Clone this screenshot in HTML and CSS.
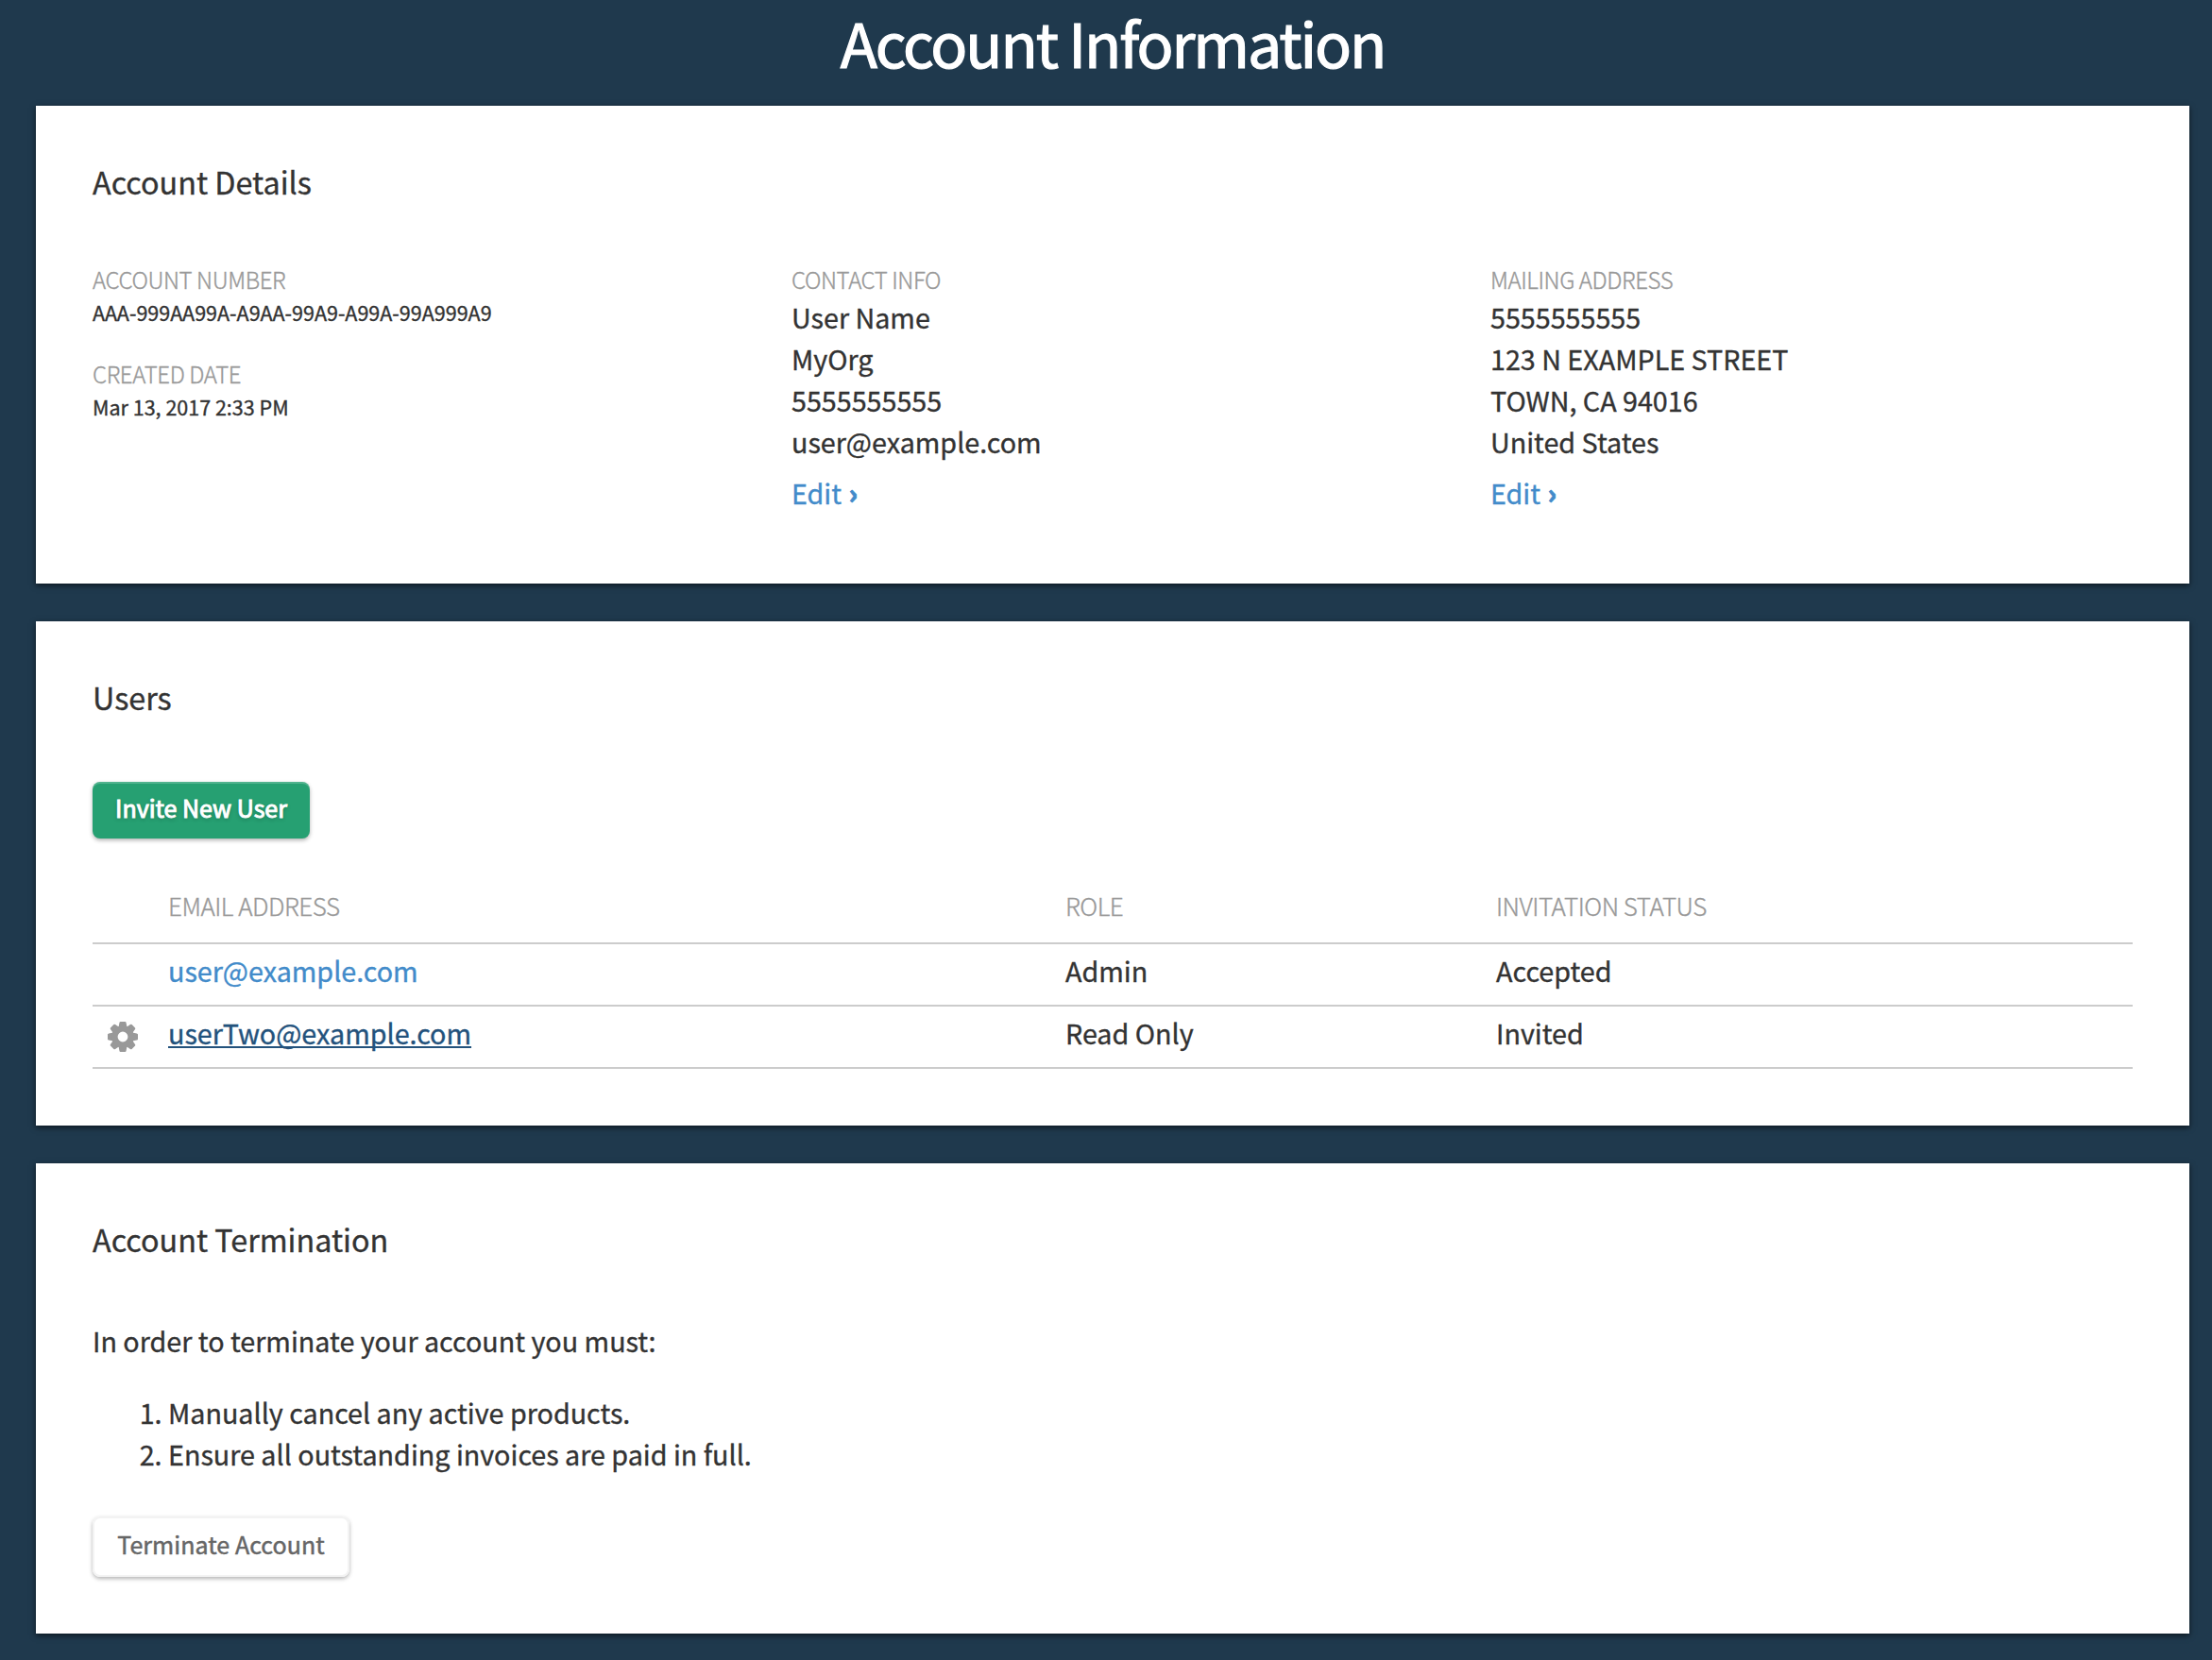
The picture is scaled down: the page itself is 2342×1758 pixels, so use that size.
FILE: index.html
```html
<!DOCTYPE html>
<html lang="en">
<head>
<meta charset="utf-8">
<title>Account Information</title>
<link rel="stylesheet" href="styles.css">
</head>
<body>
<h1 class="page-title">Account Information</h1>
<main class="cards">
  <section class="card">
    <h2 class="card-title">Account Details</h2>
    <div class="details">
      <div class="detail-col">
        <div class="label">ACCOUNT NUMBER</div>
        <div class="small">AAA-999AA99A-A9AA-99A9-A99A-99A999A9</div>
        <div class="label label-created">CREATED DATE</div>
        <div class="small">Mar 13, 2017 2:33 PM</div>
      </div>
      <div class="detail-col">
        <div class="label">CONTACT INFO</div>
        <div>User Name</div>
        <div>MyOrg</div>
        <div>5555555555</div>
        <div>user@example.com</div>
        <a class="link edit" href="#">Edit <b class="chevron">›</b></a>
      </div>
      <div class="detail-col">
        <div class="label">MAILING ADDRESS</div>
        <div>5555555555</div>
        <div>123 N EXAMPLE STREET</div>
        <div>TOWN, CA 94016</div>
        <div>United States</div>
        <a class="link edit" href="#">Edit <b class="chevron">›</b></a>
      </div>
    </div>
  </section>

  <section class="card">
    <h2 class="card-title">Users</h2>
    <button class="btn btn-primary" type="button">Invite New User</button>
    <table class="users">
      <colgroup><col class="col-gear"><col class="col-email"><col class="col-role"><col></colgroup>
      <thead>
        <tr><th></th><th>EMAIL ADDRESS</th><th>ROLE</th><th>INVITATION STATUS</th></tr>
      </thead>
      <tbody>
        <tr><td></td><td><a class="link" href="#">user@example.com</a></td><td>Admin</td><td>Accepted</td></tr>
        <tr>
          <td class="gear-cell"><svg class="gear" viewBox="-16 -16 32 32" aria-hidden="true">
            <defs><path id="tooth" d="M-4.5-10 L-3.6-14.8 Q-3.4-16-2.4-16 H2.4 Q3.4-16 3.6-14.8 L4.5-10Z"/></defs>
            <use href="#tooth"/><use href="#tooth" transform="rotate(45)"/><use href="#tooth" transform="rotate(90)"/><use href="#tooth" transform="rotate(135)"/>
            <use href="#tooth" transform="rotate(180)"/><use href="#tooth" transform="rotate(225)"/><use href="#tooth" transform="rotate(270)"/><use href="#tooth" transform="rotate(315)"/>
            <circle r="8.6" fill="none" stroke="#999" stroke-width="6.4"/>
          </svg></td>
          <td><a class="link link-active" href="#">userTwo@example.com</a></td><td>Read Only</td><td>Invited</td>
        </tr>
      </tbody>
    </table>
  </section>

  <section class="card">
    <h2 class="card-title">Account Termination</h2>
    <p class="intro">In order to terminate your account you must:</p>
    <ol class="steps">
      <li>Manually cancel any active products.</li>
      <li>Ensure all outstanding invoices are paid in full.</li>
    </ol>
    <button class="btn btn-plain" type="button">Terminate Account</button>
  </section>
</main>
</body>
</html>
```
FILE: styles.css
```css
* { box-sizing: border-box; }
body {
  margin: 0;
  min-height: 1758px;
  background: #1f394d;
  color: #333;
  font: 400 28.7px/44px "Noto Sans CJK SC", "Noto Sans", sans-serif;
  -webkit-text-stroke: .35px currentColor;
}
.page-title {
  margin: 0;
  padding: 0 24px 24px 38px;
  height: 112px;
  color: #fff;
  font-size: 64.5px;
  line-height: 88px;
  font-weight: 400;
  letter-spacing: -2.1px;
  text-align: center;
  -webkit-text-stroke: 1.2px currentColor;
}
.cards { display: flex; flex-direction: column; gap: 40px; padding: 0 24px 28px 38px; }
.card {
  padding: 60px;
  background: #fff;
  box-shadow: 0 2px 6px rgba(0, 0, 0, .6);
}
.card-title { margin: 0; font-size: 32.3px; line-height: 40px; font-weight: 400; }
.details { display: grid; grid-template-columns: 740px 740px 1fr; margin-top: 64px; }
.label { padding-top: 2px; color: #999; font-size: 24px; line-height: 36px; font-weight: 300; letter-spacing: -.4px; }
.label-created { margin-top: 28px; }
.small { font-size: 21.5px; line-height: 34px; }
.link { color: #428bca; text-decoration: none; }
.link-active { color: #23527c; text-decoration: underline; text-decoration-thickness: 2px; text-underline-offset: 2px; text-decoration-skip-ink: none; }
.edit { display: block; margin: 10px 0 14px; }
.chevron { margin-left: 1px; font-weight: 900; -webkit-text-stroke-width: .8px; }
.btn {
  display: block;
  border: 0;
  border-radius: 8px;
  font: 400 25px/54px "Noto Sans CJK SC", "Noto Sans", sans-serif;
  white-space: nowrap;
}
.btn-primary {
  width: 230px;
  height: 60px;
  margin-top: 70px;
  padding: 0 0 6px;
  background: #26a072;
  color: #fff;
  text-shadow: 0 2px 4px rgba(0, 0, 0, .25);
  box-shadow: inset 0 2px 0 rgba(255, 255, 255, .2), 0 2px 4px rgba(0, 0, 0, .3);
  -webkit-text-stroke: 1px currentColor;
}
.btn-plain {
  width: 272px;
  height: 64px;
  padding: 0 0 6px;
  background: #fff;
  color: #666;
  letter-spacing: .05px;
  box-shadow: inset 0 0 0 2px #f3f3f3, 0 2px 4px rgba(0, 0, 0, .3);
  -webkit-text-stroke: .5px currentColor;
}
.users { width: 100%; margin-top: 42px; table-layout: fixed; border-collapse: separate; border-spacing: 0; }
.col-gear { width: 80px; }
.col-email { width: 950px; }
.col-role { width: 456px; }
.users th, .users td { border-bottom: 2px solid #ccc; text-align: left; }
.users th { height: 70px; padding: 9px 0 19px; color: #999; font-size: 26px; line-height: 40px; font-weight: 300; letter-spacing: -.48px; }
.users td { height: 66px; padding: 6px 0 14px; }
.users .gear-cell { padding: 16px 0 16px 16px; line-height: 0; }
.gear { display: block; width: 32px; height: 32px; fill: #999; }
.intro { margin: 66px 0 32px; }
.steps { margin: 0 0 44px; padding-left: 80px; }
```
